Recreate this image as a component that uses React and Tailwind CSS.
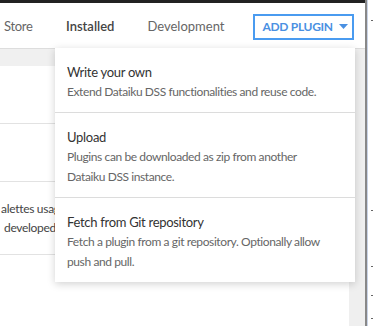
import React from "react";

const items = [
  { title: "Write your own", desc: ["Extend Dataiku DSS functionalities and reuse code."] },
  { title: "Upload", desc: ["Plugins can be downloaded as zip from another", "Dataiku DSS instance."] },
  { title: "Fetch from Git repository", desc: ["Fetch a plugin from a git repository. Optionally allow", "push and pull."] },
];

export default function App() {
  return (
    <div className="relative w-[373px] h-[326px] overflow-hidden bg-white text-[#333]" style={{ fontFamily: "Lato, 'Open Sans', sans-serif" }}>
      <div className="flex h-full">
        <div className="flex flex-col w-[365px]">
          <div className="h-[3px] bg-[#222]" />
          <div className="flex items-center h-[46px] pt-[2px] border-b border-[#ddd] text-[13px] text-[#666] whitespace-nowrap">
            <span className="ml-[4px] w-[29px] tracking-[-0.3px]">Store</span>
            <span className="ml-[33px] font-semibold text-[#444]">Installed</span>
            <span className="ml-[33px]">Development</span>
            <div className="ml-[29px] flex items-center h-[26px] w-[101px] border-2 border-[#4a9bf0] text-[#4a90e2] font-bold text-[12px] tracking-[-0.3px] pl-[7px]">
              ADD PLUGIN
              <svg width="9" height="5" viewBox="0 0 9 5" className="ml-[6px]"><path d="M0 0h9L4.5 5z" fill="#4a90e2" /></svg>
            </div>
          </div>
          <div className="flex flex-1">
            <div className="flex flex-col flex-1">
              <div className="h-[17px] bg-[#f0f0f0]" />
              <div className="h-[58px] border-b border-[#e2e2e2]" />
              <div className="h-[58px] border-b border-[#e2e2e2]" />
              <div className="h-[73px] border-b border-[#e2e2e2] flex flex-col justify-center text-[12px] tracking-[-0.3px] text-[#444] leading-[19px] whitespace-nowrap">
                <span className="ml-[1px]">alettes usage of</span>
                <span className="ml-[4px]">developed</span>
              </div>
            </div>
            <div className="w-[16px] bg-[#efefef]" />
          </div>
        </div>
        <div className="w-[2px] bg-[#888]" />
        <div className="flex-1 bg-white border-l border-[#c9d3e6]" />
      </div>

      <div className="absolute left-[371px] top-[20px] w-[2px] h-[1px] bg-[#666]" />
      <div className="absolute left-[371px] top-[210px] w-[2px] h-[1px] bg-[#666]" />
      <div className="absolute left-[371px] top-[266px] w-[2px] h-[1px] bg-[#666]" />
      <div className="absolute left-[371px] top-[295px] w-[2px] h-[1px] bg-[#666]" />
      <div className="absolute left-[371px] top-[318px] w-[2px] h-[1px] bg-[#666]" />

      <div className="absolute left-[55px] top-[48px] w-[300px] bg-white shadow-[0_2px_8px_rgba(0,0,0,0.18)] whitespace-nowrap">
        {items.map((it, i) => (
          <div key={i} className={`px-[12px] pt-[14px] pb-[10px] ${i < items.length - 1 ? "border-b border-[#dcdcdc]" : ""}`}>
            <div className="text-[13px] tracking-[-0.3px] leading-[20px] text-[#333]">{it.title}</div>
            {it.desc.map((d, j) => (
              <div key={j} className="text-[12px] tracking-[-0.4px] leading-[20px] text-[#666]">{d}</div>
            ))}
          </div>
        ))}
      </div>
    </div>
  );
}
